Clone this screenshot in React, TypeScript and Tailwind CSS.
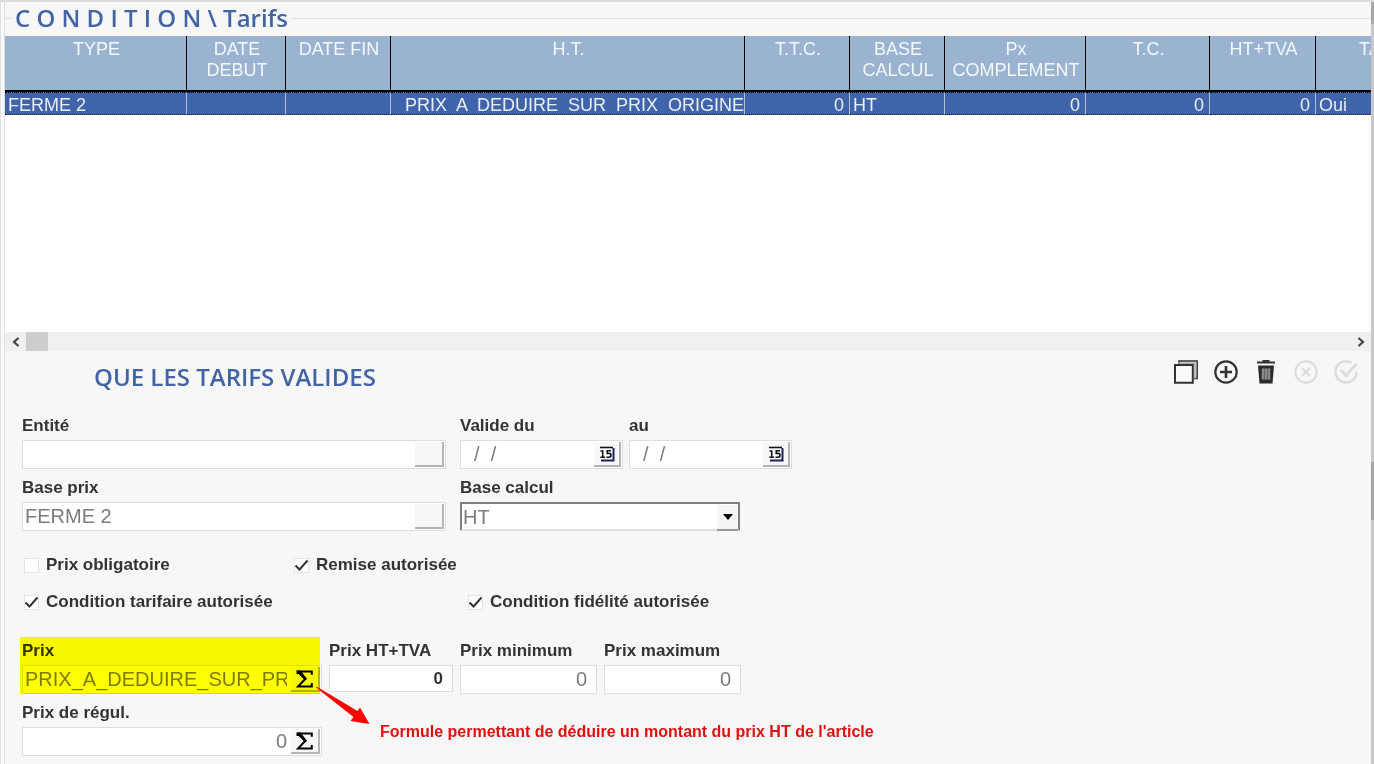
import React, { useId, type ReactNode } from "react";

type Column = { title: string; width: number; value: string; align: "left" | "right" };

const columns: Column[] = [
  { title: "TYPE", width: 182, value: "FERME 2", align: "left" },
  { title: "DATE DEBUT", width: 99, value: "", align: "left" },
  { title: "DATE FIN", width: 105, value: "", align: "left" },
  { title: "H.T.", width: 354, value: "PRIX  A  DEDUIRE  SUR  PRIX  ORIGINE", align: "right" },
  { title: "T.T.C.", width: 105, value: "0", align: "right" },
  { title: "BASE CALCUL", width: 95, value: "HT", align: "left" },
  { title: "Px COMPLEMENT", width: 141, value: "0", align: "right" },
  { title: "T.C.", width: 124, value: "0", align: "right" },
  { title: "HT+TVA", width: 106, value: "0", align: "right" },
  { title: "TA", width: 112, value: "Oui", align: "left" },
];

const raised =
  "mr-px flex h-[25px] shrink-0 items-center justify-center border-r-2 border-b-2 border-[#b4b4b4] bg-[#f7f7f7]";

function CalendarIcon() {
  return (
    <svg viewBox="0 0 16 16" className="h-4 w-4" aria-hidden="true">
      <path d="M1 1h12.500v12H1z" fill="#fff" />
      <path d="M1 1.500h13" stroke="#111" strokeWidth="1.600" />
      <path d="M14.500 2v12.500H2" fill="none" stroke="#1f1f66" strokeWidth="2" />
      <path d="M1.500 5h2.200v6M1.300 11.300h4.800" fill="none" stroke="#111" strokeWidth="1.600" />
      <path d="M12 4.800H8.200v2.600h2q1.800 0 1.800 1.900t-1.800 1.900H7.500" fill="none" stroke="#111" strokeWidth="1.600" />
    </svg>
  );
}

function SigmaIcon() {
  return (
    <svg viewBox="0 0 18 20" className="h-5 w-[18px]" aria-hidden="true">
      <path
        d="M1.500 5V2.500H15.800V5.800M2 3L9.200 10 2 17.500H15.800V14"
        fill="none"
        stroke="#000"
        strokeWidth="2"
      />
      <path d="M1 1.500h3.500L11 9.800 9 11.500z" fill="#000" />
    </svg>
  );
}

type FieldProps = {
  label: string;
  value?: string;
  width: string;
  align?: string;
  small?: boolean;
  button?: ReactNode;
  buttonWidth?: string;
  buttonLabel?: string;
};

function Field({ label, value = "", width, align = "text-left", small, button, buttonWidth = "w-[27px]", buttonLabel }: FieldProps) {
  const id = useId();
  return (
    <div className={`flex flex-col gap-[5px] ${width}`}>
      <label htmlFor={id} className="h-5 text-[17px] leading-[22px] font-bold whitespace-nowrap">
        {label}
      </label>
      <div className={`flex items-center border border-[#dedede] bg-white ${small ? "h-[27px]" : "h-[29px]"}`}>
        <input
          id={id}
          defaultValue={value}
          className={`h-full w-full min-w-0 flex-1 bg-transparent pl-0.5 outline-none ${align} ${
            small ? "text-[17px] font-bold text-[#333]" : "text-xl text-[#7c7c7c]"
          } ${button !== undefined ? "pr-1" : "pr-[9px]"}`}
        />
        {button !== undefined && (
          <button type="button" aria-label={buttonLabel} className={`${raised} ${buttonWidth}`}>
            {button}
          </button>
        )}
      </div>
    </div>
  );
}

function Check({ label, checked, className = "" }: { label: string; checked?: boolean; className?: string }) {
  return (
    <label className={`flex h-5 items-center gap-[7px] text-[17px] leading-[22px] font-bold whitespace-nowrap ${className}`}>
      <span className="grid h-[15px] w-[15px] place-items-center">
        <input
          type="checkbox"
          defaultChecked={checked}
          className="peer col-start-1 row-start-1 h-[15px] w-[15px] appearance-none border border-[#e4e4e4] bg-white"
        />
        <svg
          viewBox="0 0 15 15"
          className="pointer-events-none z-10 col-start-1 row-start-1 hidden h-[15px] w-[15px] peer-checked:block"
          aria-hidden="true"
        >
          <path d="M1.500 7.500l4 4L13.500 2.500" fill="none" stroke="#333" strokeWidth="2" />
        </svg>
      </span>
      {label}
    </label>
  );
}

function PriceTable() {
  return (
    <div className="h-[296px] overflow-hidden bg-white">
      <table className="w-[1423px] table-fixed border-separate border-spacing-0 text-lg">
        <colgroup>
          {columns.map((c) => (
            <col key={c.title} style={{ width: c.width }} />
          ))}
        </colgroup>
        <thead>
          <tr className="h-14 bg-[#9ab3d0] text-[#f4f8fd]">
            {columns.map((c) => (
              <th
                key={c.title}
                className="border-r border-b-2 border-black pt-[3px] pr-1 pl-1.5 align-top leading-[21px] font-normal last:pl-[43px] last:text-left"
              >
                {c.title}
              </th>
            ))}
          </tr>
        </thead>
        <tbody>
          <tr className="bg-[#4064a9] text-[#e8eefa]">
            {columns.map((c) => (
              <td
                key={c.title}
                className={`h-[23px] border-t border-r border-b border-dotted border-t-black border-r-[#b4bdd0] border-b-[#222] pt-[3px] pb-0 pl-[3px] leading-[18px] whitespace-pre [border-right-style:solid] ${
                  c.align === "right" ? "text-right" : "text-left"
                } ${c.value === "0" ? "pr-[5px]" : "pr-0"}`}
              >
                {c.value}
              </td>
            ))}
          </tr>
        </tbody>
      </table>
    </div>
  );
}

function ScrollBar() {
  return (
    <div className="flex h-[19px] items-center bg-[#f0f0f0] text-[#444]">
      <button type="button" aria-label="Défiler à gauche" className="flex h-full w-[21px] items-center justify-center">
        <svg viewBox="0 0 10 10" className="h-[10px] w-[10px]">
          <path d="M7.500 1L3 5l4.500 4" fill="none" stroke="currentColor" strokeWidth="2.200" />
        </svg>
      </button>
      <div className="h-full w-[22px] bg-[#cdcdcd]" />
      <div className="flex-1" />
      <button type="button" aria-label="Défiler à droite" className="flex h-full w-[21px] items-center justify-center">
        <svg viewBox="0 0 10 10" className="h-[10px] w-[10px]">
          <path d="M2.500 1L7 5 2.500 9" fill="none" stroke="currentColor" strokeWidth="2.200" />
        </svg>
      </button>
    </div>
  );
}

function Toolbar() {
  return (
    <div className="flex gap-4 text-[#333]">
      <button type="button" aria-label="Dupliquer" className="h-6 w-6">
        <svg viewBox="0 0 24 24" fill="none" stroke="currentColor">
          <path d="M5 4V1h18.200v17.500H20" strokeWidth="1.500" />
          <path d="M4 3.200h17v17" strokeWidth="1.200" stroke="#999" />
          <path d="M1 5h17.800v17.800H1z" strokeWidth="2" fill="#fafafa" />
        </svg>
      </button>
      <button type="button" aria-label="Ajouter" className="h-6 w-6">
        <svg viewBox="0 0 24 24" fill="none" stroke="currentColor" strokeWidth="2.200">
          <circle cx="12" cy="12" r="10.700" />
          <path d="M12 6v12M6 12h12" strokeWidth="2.600" />
        </svg>
      </button>
      <button type="button" aria-label="Supprimer" className="h-6 w-6">
        <svg viewBox="0 0 24 24" fill="none" stroke="currentColor">
          <path d="M3 2.500h18M8.500 1h7" strokeWidth="2" />
          <path d="M4 5.500h16l-1.500 18h-13z" fill="#2b2b2b" stroke="none" />
          <path d="M7.500 8.500h9v11h-9z" fill="#666" stroke="none" />
          <path d="M9 8.500v11M12 8.500v11M15 8.500v11" strokeWidth="1.200" stroke="#a0a0a0" />
        </svg>
      </button>
      <button type="button" aria-label="Annuler" disabled className="h-6 w-6 text-[#dcdcdc]">
        <svg viewBox="0 0 24 24" fill="none" stroke="currentColor" strokeWidth="2">
          <circle cx="12" cy="12" r="10.700" />
          <path d="M8 8l8 8M16 8l-8 8" strokeWidth="2.400" />
        </svg>
      </button>
      <button type="button" aria-label="Valider" disabled className="h-6 w-6 text-[#dcdcdc]">
        <svg viewBox="0 0 24 24" fill="none" stroke="currentColor" strokeWidth="2.400">
          <path d="M17.500 2.800A10.600 10.600 0 1 0 22.600 11.500" />
          <path d="M7 10l5 5.500L22.500 4" strokeWidth="3" />
        </svg>
      </button>
    </div>
  );
}

export default function App() {
  return (
    <div className="flex min-h-screen w-full overflow-hidden border-t-2 border-[#dadada] bg-[#f7f7f7] font-['Liberation_Sans',Arial,sans-serif] text-[#333]">
      <div className="w-1 shrink-0 border-l border-[#e0e0e0] bg-[#fafafa]" />
      <main className="flex min-w-0 flex-1 flex-col border-l border-[#dedede]">
        <header className="flex h-[34px] items-center gap-[3px] pb-0.5">
          <div className="h-px w-[7px] bg-[#dedede]" />
          <h1 className="font-['Open_Sans','Noto_Sans',sans-serif] text-2xl leading-8 font-semibold whitespace-nowrap text-[#4064a5]">
            C O N D I T I O N \ Tarifs
          </h1>
          <div className="h-px flex-1 bg-[#dedede]" />
        </header>

        <PriceTable />
        <ScrollBar />

        <div className="flex h-[52px] items-center justify-between pr-[13px] pl-[89px]">
          <h2 className="font-['Open_Sans','Noto_Sans',sans-serif] text-2xl leading-8 font-semibold whitespace-nowrap text-[#4064a5]">
            QUE LES TARIFS VALIDES
          </h2>
          <div className="pb-[11px]">
            <Toolbar />
          </div>
        </div>

        <form className="flex flex-col pt-3 pb-2 pl-[17px]">
          <div className="flex gap-[14px]">
            <Field label="Entité" width="w-[424px]" button="" buttonWidth="w-[29px]" buttonLabel="Choisir une entité" />
            <div className="flex gap-[6px]">
              <Field label="Valide du" value="  /  /" width="w-[163px]" button={<CalendarIcon />} buttonLabel="Calendrier de début" />
              <Field label="au" value="  /  /" width="w-[163px]" button={<CalendarIcon />} buttonLabel="Calendrier de fin" />
            </div>
          </div>

          <div className="mt-2 flex h-[54px] gap-[14px]">
            <Field label="Base prix" value="FERME 2" width="w-[424px]" button="" buttonWidth="w-[29px]" buttonLabel="Choisir une base prix" />
            <div className="flex w-[280px] flex-col gap-[5px]">
              <label htmlFor="base-calcul" className="h-5 text-[17px] leading-[22px] font-bold">
                Base calcul
              </label>
              <div className="relative h-[31px]">
                <select
                  id="base-calcul"
                  defaultValue="HT"
                  className="h-full w-full appearance-none border-2 border-[#808080] border-b-[#e0e0e0] bg-white pl-px text-xl leading-6 text-[#7c7c7c]"
                >
                  <option>HT</option>
                </select>
                <span className="pointer-events-none absolute top-[3px] right-0.5 flex h-[26px] w-[21px] items-center justify-center border-b-2 border-[#999] bg-[#f5f5f5]">
                  <svg viewBox="0 0 10 6" className="h-[6px] w-[10px]">
                    <path d="M0 0h10L5 6z" fill="#000" />
                  </svg>
                </span>
              </div>
            </div>
          </div>

          <div className="mt-6 flex pl-0.5">
            <Check label="Prix obligatoire" className="w-[270px]" />
            <Check label="Remise autorisée" checked />
          </div>
          <div className="mt-[17px] flex pl-0.5">
            <Check label="Condition tarifaire autorisée" checked className="w-[444px]" />
            <Check label="Condition fidélité autorisée" checked />
          </div>

          <div className="mt-7 flex gap-[7px]">
            <div className="relative">
              <Field label="Prix" value="PRIX_A_DEDUIRE_SUR_PR" width="w-[300px]" button={<SigmaIcon />} buttonWidth="w-[29px]" buttonLabel="Formule du prix" />
              <div className="pointer-events-none absolute -top-[3px] right-0.5 bottom-0 -left-0.5 bg-[#ffff00] mix-blend-multiply" />
              <svg
                viewBox="0 0 56 40"
                className="pointer-events-none absolute top-[46px] left-[293px] z-10 h-10 w-14"
                aria-hidden="true"
              >
                <path d="M1 1.500L2 .8 42.500 25 45 21.500 54.500 38 35.500 35 38.500 31z" fill="#f00" />
              </svg>
            </div>
            <Field label="Prix HT+TVA" value="0" width="w-[124px]" align="text-right" small />
            <Field label="Prix minimum" value="0" width="w-[137px]" align="text-right" />
            <Field label="Prix maximum" value="0" width="w-[137px]" align="text-right" />
          </div>
          <div className="mt-2 flex gap-[58px]">
            <Field label="Prix de régul." value="0" width="w-[300px]" align="text-right" button={<SigmaIcon />} buttonWidth="w-[29px]" buttonLabel="Formule de régularisation" />
            <p className="pt-5 text-base leading-5 font-bold whitespace-nowrap text-[#e01010]">
              Formule permettant de déduire un montant du prix HT de l'article
            </p>
          </div>
        </form>
      </main>
      <div className="flex w-[3px] shrink-0 flex-col bg-[#c8c8c8]">
        <div className="h-[22px] bg-[#a6a6a6]" />
        <div className="h-[438px]" />
        <div className="h-[58px] bg-[#a6a6a6]" />
      </div>
    </div>
  );
}
